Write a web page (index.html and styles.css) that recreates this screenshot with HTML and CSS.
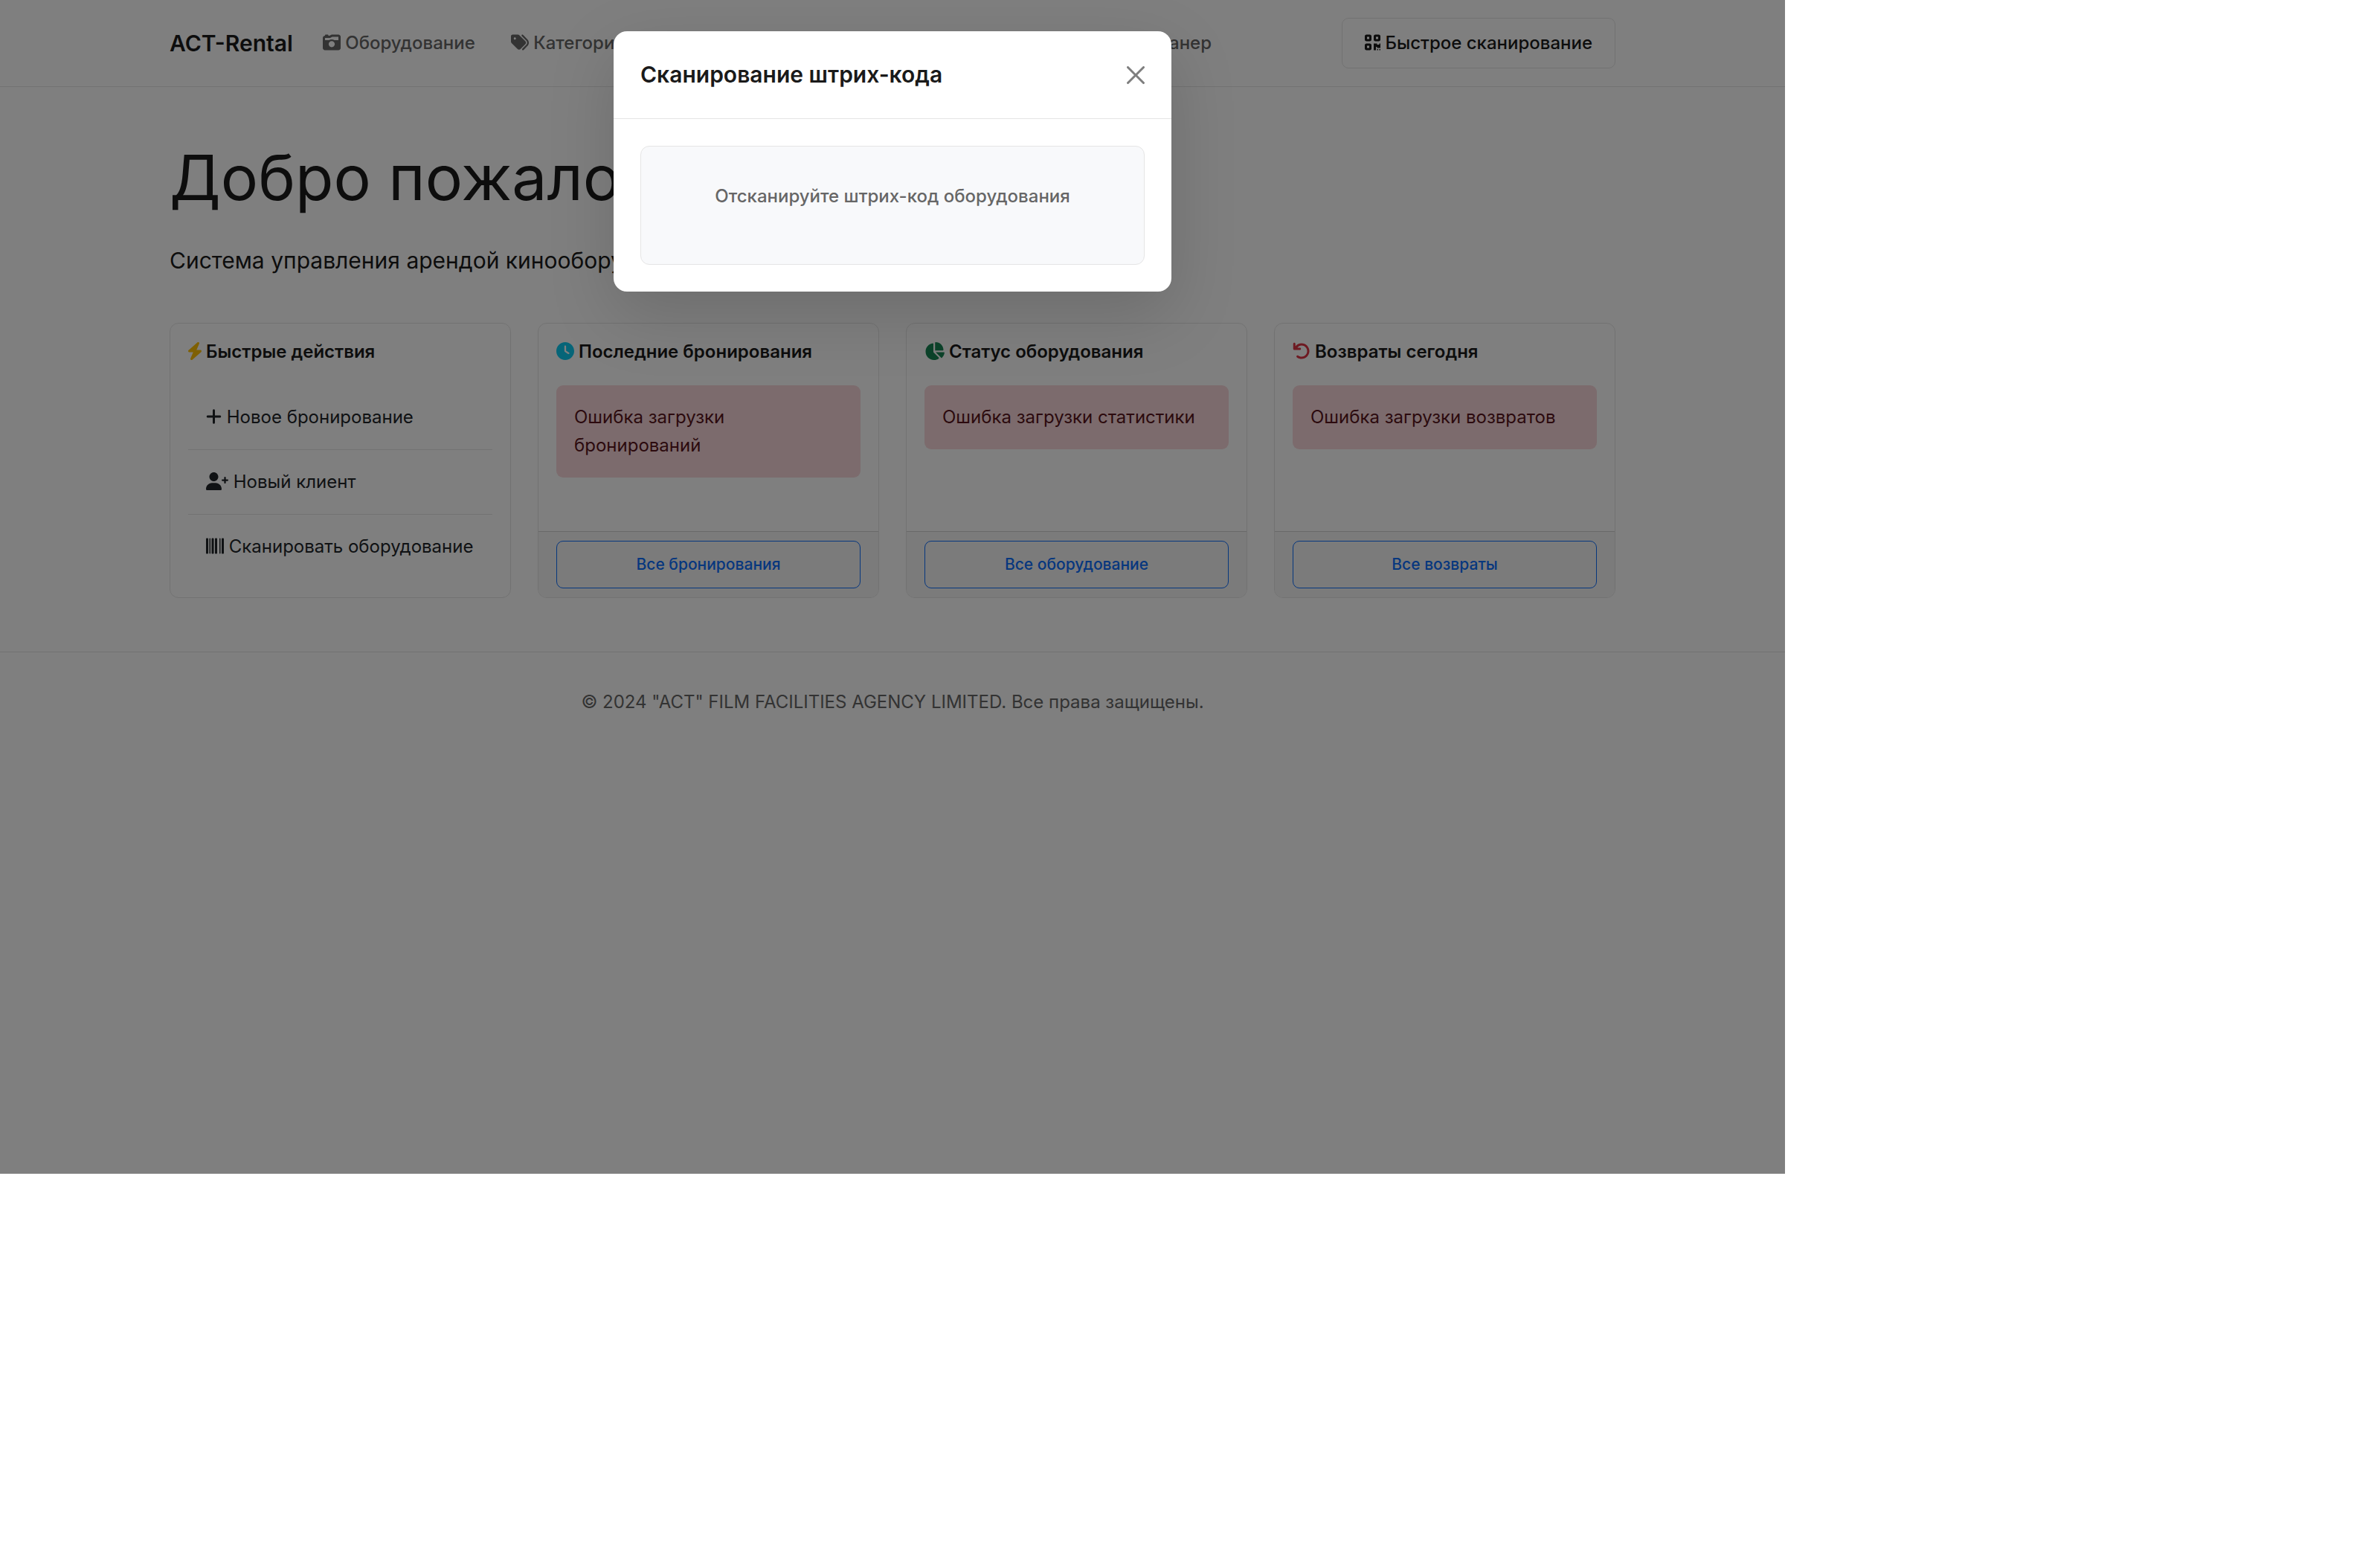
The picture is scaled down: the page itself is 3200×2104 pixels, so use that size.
FILE: index.html
```html
<!DOCTYPE html>
<html lang="ru">
<head>
<meta charset="utf-8">
<title>ACT-Rental</title>
<link rel="stylesheet" href="styles.css">
</head>
<body>
<div class="app">
  <header class="header">
    <div class="container navbar">
      <a class="brand" href="#">ACT-Rental</a>
      <nav class="nav">
        <a class="nav-link" href="#"><svg class="icon" viewBox="0 0 512 512" width="24" height="24"><path fill-rule="evenodd" d="M64 64V48C64 39.16 71.16 32 80 32H144C152.8 32 160 39.16 160 48V64H192L242.5 38.76C251.4 34.31 261.2 32 271.1 32H448C483.3 32 512 60.65 512 96V416C512 451.3 483.3 480 448 480H64C28.65 480 0 451.3 0 416V128C0 92.65 28.65 64 64 64zM220.6 121.2C211.7 125.7 201.9 128 192 128H64V192H178.8C200.8 176.9 227.3 168 256 168C284.7 168 311.2 176.9 333.2 192H448V96H271.1L220.6 121.2zM256 216C207.4 216 168 255.4 168 304C168 352.6 207.4 392 256 392C304.6 392 344 352.6 344 304C344 255.4 304.6 216 256 216z"/></svg> Оборудование</a>
        <a class="nav-link" href="#"><svg class="icon" viewBox="0 0 512 512" width="24" height="24"><path d="M472.8 168.4C525.1 221.4 525.1 306.6 472.8 359.6L360.8 472.9C351.5 482.3 336.3 482.4 326.9 473.1C317.4 463.8 317.4 448.6 326.7 439.1L438.6 325.9C472.5 291.6 472.5 236.4 438.6 202.1L310.9 72.87C301.5 63.44 301.6 48.25 311.1 38.93C320.5 29.61 335.7 29.7 344.1 39.13L472.8 168.4zM0 229.5V80C0 53.49 21.49 32 48 32H197.5C214.5 32 230.7 38.74 242.7 50.75L410.7 218.7C435.7 243.7 435.7 284.3 410.7 309.3L277.3 442.7C252.3 467.7 211.7 467.7 186.7 442.7L18.75 274.7C6.743 262.7 0 246.5 0 229.5zM112 112C94.33 112 80 126.3 80 144C80 161.7 94.33 176 112 176C129.7 176 144 161.7 144 144C144 126.3 129.7 112 112 112z"/></svg> Категории</a>
      </nav>
      <a class="nav-link nav-last" href="#">Сканер</a>
      <button class="btn scan-btn" type="button"><svg class="icon" viewBox="0 0 448 512" width="21" height="24"><path d="M144 32C170.5 32 192 53.49 192 80V176C192 202.5 170.5 224 144 224H48C21.49 224 0 202.5 0 176V80C0 53.49 21.49 32 48 32H144zM128 96H64V160H128V96zM144 288C170.5 288 192 309.5 192 336V432C192 458.5 170.5 480 144 480H48C21.49 480 0 458.5 0 432V336C0 309.5 21.49 288 48 288H144zM128 352H64V416H128V352zM256 80C256 53.49 277.5 32 304 32H400C426.5 32 448 53.49 448 80V176C448 202.5 426.5 224 400 224H304C277.5 224 256 202.5 256 176V80zM320 160H384V96H320V160zM352 448H384V480H352V448zM448 480H416V448H448V480zM416 288H448V416H352V384H320V480H256V288H352V320H416V288z"/></svg> Быстрое сканирование</button>
    </div>
  </header>

  <main class="container main">
    <h1 class="welcome">Добро пожаловать</h1>
    <p class="lead">Система управления арендой кинооборудования</p>
    <div class="cards">
      <section class="card">
        <div class="card-body">
          <h2 class="card-title"><svg class="icon warning" viewBox="0 0 384 512" width="18" height="24"><path d="M240.5 224H352C365.3 224 377.3 232.3 381.1 244.7C386.6 257.2 383.1 271.3 373.1 280.1L117.1 504.1C105.8 513.9 89.27 514.7 77.19 505.9C65.1 497.1 60.7 481.1 66.59 467.4L143.5 288H31.1C18.67 288 6.733 279.7 2.313 267.3C-2.107 254.8 1.419 240.7 10.93 231.9L266.9 7.918C278.2-1.92 294.7-2.669 306.8 6.114C318.9 14.9 323.3 30.87 317.4 44.61L240.5 224z"/></svg> Быстрые действия</h2>
          <div class="actions">
            <a class="action" href="#"><svg class="icon" viewBox="0 0 448 512" width="21" height="24"><path d="M432 256c0 17.69-14.33 32.01-32 32.01H256v144c0 17.69-14.33 31.99-32 31.99s-32-14.3-32-31.99v-144H48c-17.67 0-32-14.32-32-32.01s14.33-31.99 32-31.99H192v-144c0-17.69 14.33-32.01 32-32.01s32 14.32 32 32.01v144h144C417.7 224 432 238.3 432 256z"/></svg> Новое бронирование</a>
            <a class="action" href="#"><svg class="icon" viewBox="0 0 640 512" width="30" height="24"><path d="M224 256c70.7 0 128-57.31 128-128S294.7 0 224 0C153.3 0 96 57.31 96 128S153.3 256 224 256zM274.7 304H173.3C77.61 304 0 381.7 0 477.4C0 496.5 15.52 512 34.66 512h378.7C432.5 512 448 496.5 448 477.4C448 381.7 370.4 304 274.7 304zM616 200h-48v-48C568 138.8 557.3 128 544 128s-24 10.75-24 24v48h-48C458.8 200 448 210.8 448 224s10.75 24 24 24h48v48C520 309.3 530.8 320 544 320s24-10.75 24-24v-48h48C629.3 248 640 237.3 640 224S629.3 200 616 200z"/></svg> Новый клиент</a>
            <a class="action" href="#"><svg class="icon" viewBox="0 0 512 512" width="24" height="24"><path d="M40 32C53.25 32 64 42.75 64 56V456C64 469.3 53.25 480 40 480H24C10.75 480 0 469.3 0 456V56C0 42.75 10.75 32 24 32H40zM128 48V464C128 472.8 120.8 480 112 480C103.2 480 96 472.8 96 464V48C96 39.16 103.2 32 112 32C120.8 32 128 39.16 128 48zM200 32C213.3 32 224 42.75 224 56V456C224 469.3 213.3 480 200 480H184C170.7 480 160 469.3 160 456V56C160 42.75 170.7 32 184 32H200zM296 32C309.3 32 320 42.75 320 56V456C320 469.3 309.3 480 296 480H280C266.7 480 256 469.3 256 456V56C256 42.75 266.7 32 280 32H296zM448 56C448 42.75 458.7 32 472 32H488C501.3 32 512 42.75 512 56V456C512 469.3 501.3 480 488 480H472C458.7 480 448 469.3 448 456V56zM384 48C384 39.16 391.2 32 400 32C408.8 32 416 39.16 416 48V464C416 472.8 408.8 480 400 480C391.2 480 384 472.8 384 464V48z"/></svg> Сканировать оборудование</a>
          </div>
        </div>
      </section>
      <section class="card">
        <div class="card-body">
          <h2 class="card-title"><svg class="icon info" viewBox="0 0 512 512" width="24" height="24"><path d="M256 512C114.6 512 0 397.4 0 256C0 114.6 114.6 0 256 0C397.4 0 512 114.6 512 256C512 397.4 397.4 512 256 512zM232 256C232 264 236 271.5 242.7 275.1L338.7 339.1C349.7 347.3 364.6 344.3 371.1 333.3C379.3 322.3 376.3 307.4 365.3 300L280 243.2V120C280 106.7 269.3 96 255.1 96C242.7 96 231.1 106.7 231.1 120L232 256z"/></svg> Последние бронирования</h2>
          <div class="alert" role="alert">Ошибка загрузки бронирований</div>
        </div>
        <div class="card-footer"><a class="btn all-btn" href="#">Все бронирования</a></div>
      </section>
      <section class="card">
        <div class="card-body">
          <h2 class="card-title"><svg class="icon success" viewBox="0 0 576 512" width="27" height="24"><path d="M304 16.58C304 7.555 310.1 0 320 0C443.7 0 544 100.3 544 224C544 233 536.4 240 527.4 240H304V16.58zM32 272C32 150.7 122.1 50.34 238.1 34.25C248.2 32.99 256 40.36 256 49.61V288L412.5 444.5C419.2 451.2 418.7 462.2 410.1 467.7C371.8 495.6 323.8 512 272 512C139.5 512 32 404.6 32 272zM558.4 288C567.6 288 575 295.8 573.8 305C566.1 360.9 539.1 410.6 499.9 447.3C493.9 452.1 484.5 452.5 478.7 446.7L320 288H558.4z"/></svg> Статус оборудования</h2>
          <div class="alert" role="alert">Ошибка загрузки статистики</div>
        </div>
        <div class="card-footer"><a class="btn all-btn" href="#">Все оборудование</a></div>
      </section>
      <section class="card">
        <div class="card-body">
          <h2 class="card-title"><svg class="icon danger" viewBox="0 0 512 512" width="24" height="24"><path d="M480 256c0 123.4-100.5 223.9-223.9 223.9c-48.84 0-95.17-15.58-134.2-44.86c-14.12-10.59-16.97-30.66-6.375-44.81c10.59-14.12 30.62-16.94 44.81-6.375c27.84 20.91 61 31.94 95.88 31.94C344.3 415.8 416 344.1 416 256s-71.69-159.8-159.8-159.8c-46 0-89 20-119 63.8H208c17.7 0 32 14.3 32 32s-14.3 32-32 32H48c-17.7 0-32-14.3-32-32V48c0-17.7 14.3-32 32-32s32 14.3 32 32v70C122 63 186 32.11 256.1 32.11C379.5 32.11 480 132.6 480 256z"/></svg> Возвраты сегодня</h2>
          <div class="alert" role="alert">Ошибка загрузки возвратов</div>
        </div>
        <div class="card-footer"><a class="btn all-btn" href="#">Все возвраты</a></div>
      </section>
    </div>
  </main>

  <footer class="footer">© 2024 "ACT" FILM FACILITIES AGENCY LIMITED. Все права защищены.</footer>

  <div class="overlay">
    <div class="modal" role="dialog" aria-modal="true" aria-labelledby="scan-title">
      <div class="modal-header">
        <h2 class="modal-title" id="scan-title">Сканирование штрих-кода</h2>
        <button class="close" type="button" aria-label="Закрыть"><svg viewBox="0 0 16 16" width="24" height="24"><path d="M.293.293a1 1 0 0 1 1.414 0L8 6.586 14.293.293a1 1 0 1 1 1.414 1.414L9.414 8l6.293 6.293a1 1 0 0 1-1.414 1.414L8 9.414l-6.293 6.293a1 1 0 0 1-1.414-1.414L6.586 8 .293 1.707a1 1 0 0 1 0-1.414z"/></svg></button>
      </div>
      <div class="modal-body">
        <div class="scan-area"><p class="scan-hint">Отсканируйте штрих-код оборудования</p></div>
      </div>
    </div>
  </div>
</div>
</body>
</html>
```
FILE: styles.css
```css
* { box-sizing: border-box; }

body {
  margin: 0;
  background: #fff;
  color: #1a1a1a;
  font: 400 24px/38px Inter, "Noto Sans", sans-serif;
}

h1, h2, p { margin: 0; }
a { color: inherit; text-decoration: none; }

.app {
  position: relative;
  width: 75vw;
  min-height: 75vh;
  background: #fff;
}

.container {
  width: 100%;
  max-width: 1980px;
  margin: 0 auto;
  padding: 0 18px;
}

.icon {
  fill: currentColor;
  vertical-align: -3px;
}

.warning { color: #ffc107; }
.info { color: #0dcaf0; }
.success { color: #198754; }
.danger { color: #dc3545; }

.btn {
  border: 1px solid #e5e5e5;
  border-radius: 9px;
  background: transparent;
  color: #1a1a1a;
  font: inherit;
  font-weight: 500;
  text-align: center;
}

/* Header */
.header {
  padding: 24px 0;
  border-bottom: 1px solid #e5e5e5;
}

.navbar {
  display: flex;
  align-items: center;
}

.brand {
  margin-right: 40px;
  font-size: 30px;
  font-weight: 600;
}

.nav {
  display: flex;
  gap: 48px;
  flex: 1;
}

.nav-link {
  color: #666;
  font-weight: 500;
}

.nav-last { margin-right: 175px; }
.scan-btn { padding: 14px 30px; }

/* Main */
.main {
  padding-top: 72px;
  padding-bottom: 72px;
}

.welcome {
  margin-bottom: 38px;
  font-size: 84px;
  font-weight: 400;
  line-height: 99px;
}

.lead {
  margin-bottom: 60px;
  font-size: 30px;
  line-height: 48px;
}

.cards {
  display: grid;
  grid-template-columns: repeat(4, 1fr);
  gap: 36px;
}

.card {
  display: flex;
  flex-direction: column;
  overflow: hidden;
  border: 1px solid #e5e5e5;
  border-radius: 12px;
}

.card-body {
  flex: 1;
  padding: 24px;
}

.card-title {
  margin-bottom: 32px;
  font-size: 24px;
  font-weight: 600;
  line-height: 27px;
}

.action {
  display: block;
  padding: 24px;
  border-bottom: 1px solid #e5e5e5;
  color: #212529;
}

.action:last-child { border-bottom-color: transparent; }

.alert {
  padding: 24px;
  border-radius: 9px;
  background: #f8d7da;
  color: #58151c;
}

.card-footer {
  padding: 12px 24px;
  border-top: 1px solid #d3d3d3;
  background: #f7f7f7;
}

.all-btn {
  display: block;
  padding: 12px;
  border-color: #0d6efd;
  color: #0d6efd;
  font-size: 21px;
}

/* Footer */
.footer {
  padding: 48px 18px;
  border-top: 1px solid #e5e5e5;
  color: #666;
  text-align: center;
}

/* Scan dialog */
.overlay {
  position: absolute;
  inset: 0;
  padding: 42px 18px;
  background: rgba(0, 0, 0, .5);
}

.modal {
  max-width: 750px;
  margin: 0 auto;
  border-radius: 18px;
  background: #fff;
  box-shadow: 0 30px 90px rgba(0, 0, 0, .15);
}

.modal-header {
  display: flex;
  align-items: center;
  justify-content: space-between;
  padding: 36px;
  border-bottom: 1px solid #e5e5e5;
}

.modal-title {
  font-size: 30px;
  font-weight: 600;
  line-height: 45px;
}

.close {
  display: flex;
  padding: 0;
  border: 0;
  background: none;
  opacity: .5;
}

.modal-body { padding: 36px; }

.scan-area {
  padding: 48px 48px 72px;
  border: 1px solid #e5e5e5;
  border-radius: 12px;
  background: #f8f9fb;
  text-align: center;
}

.scan-hint {
  color: #666;
  font-weight: 500;
}
```
